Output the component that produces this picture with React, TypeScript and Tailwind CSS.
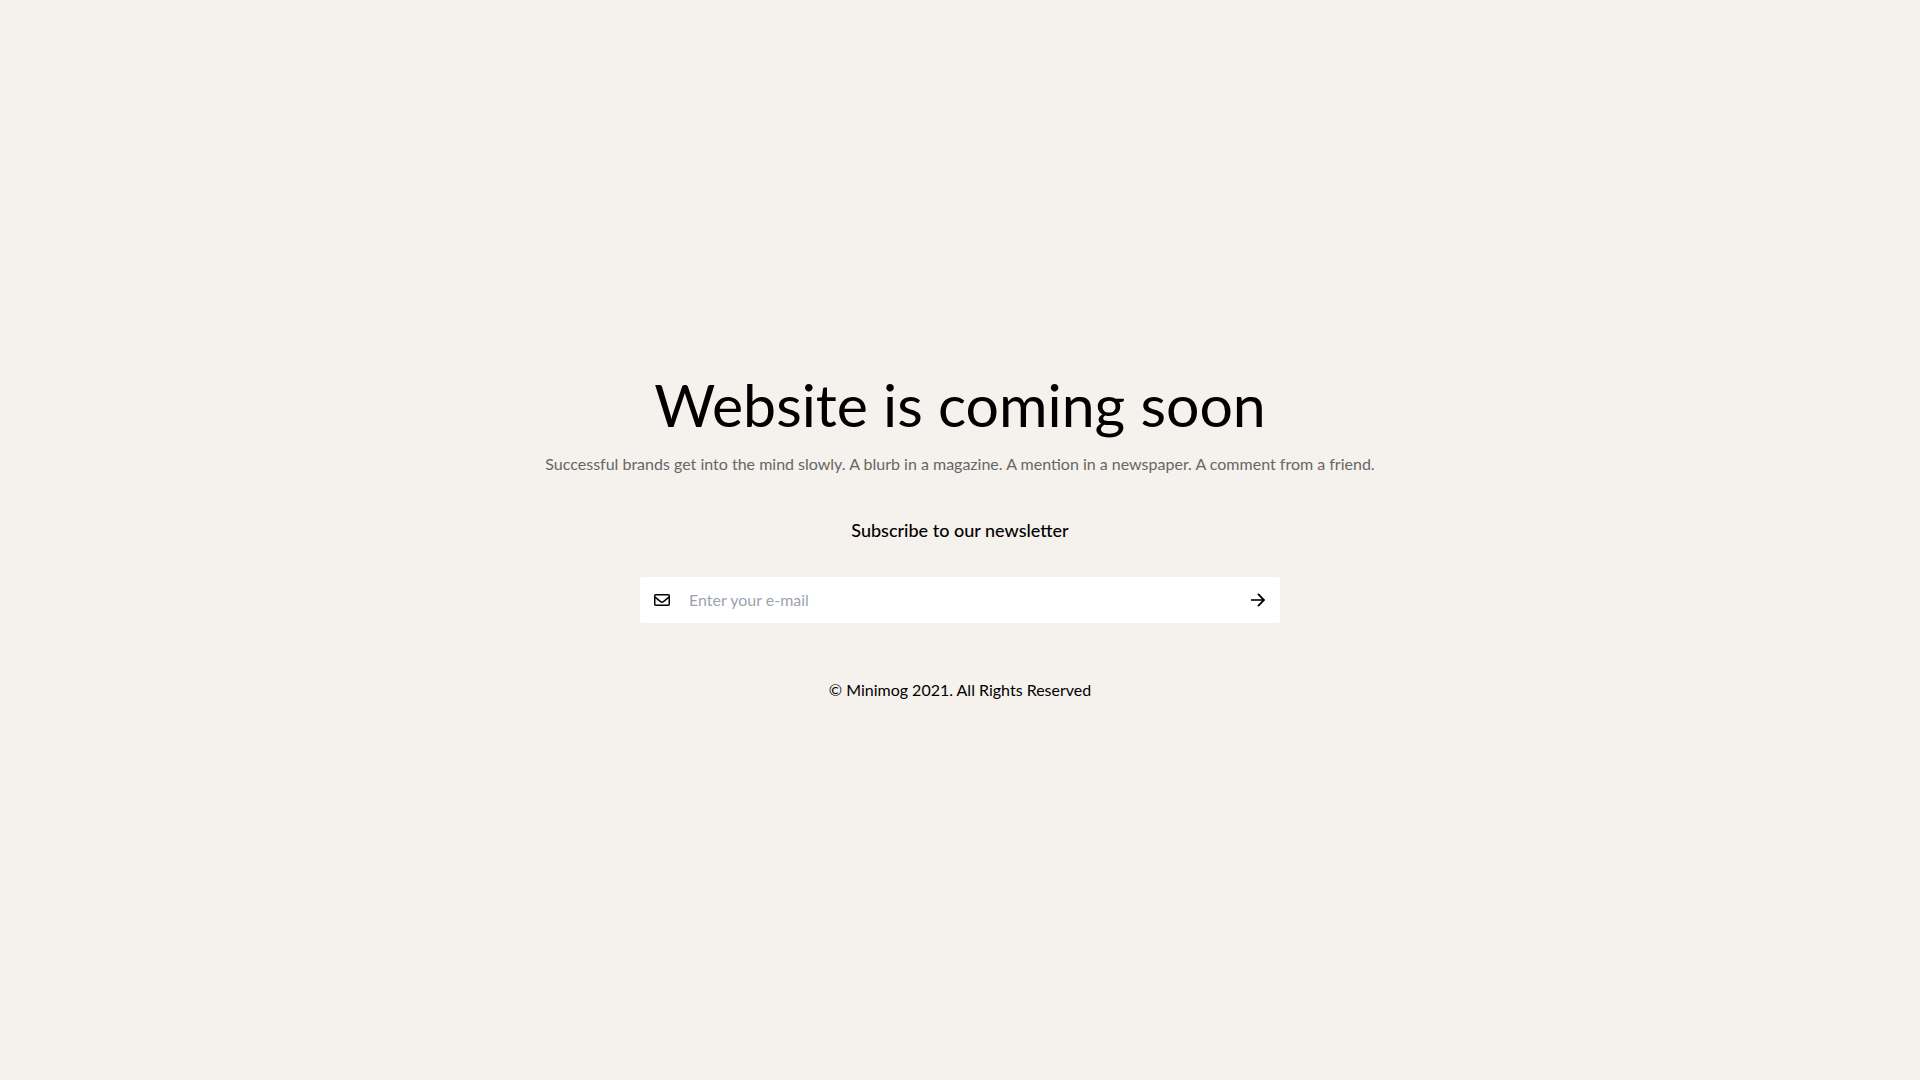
function MailIcon() {
  return (
    <svg width="16" height="12" viewBox="0 0 16 12" fill="none" stroke="currentColor" aria-hidden="true">
      <rect x="0.75" y="0.75" width="14.5" height="10.5" rx="1" strokeWidth="1.5" />
      <path d="M1 3.2L6.6 7.6Q8 8.7 9.4 7.6L15 3.2" strokeWidth="1.5" />
    </svg>
  );
}

function ArrowIcon() {
  return (
    <svg width="14" height="14" viewBox="0 0 14 14" fill="none" stroke="currentColor" aria-hidden="true">
      <path d="M0 7H13" strokeWidth="1.6" />
      <path d="M7 0.8L13 7L7 13.2" strokeWidth="1.8" />
    </svg>
  );
}

export default function App() {
  return (
    <main className="flex min-h-screen flex-col items-center justify-center bg-[#f5f1ec] px-4 pb-[7px] text-center font-[Lato,sans-serif] text-black">
      <h1 className="text-[59px] leading-[72px]">Website is coming soon</h1>
      <p className="mt-[9px] text-[16px] leading-[28px] text-[#666666]">
        Successful brands get into the mind slowly. A blurb in a magazine. A mention in a newspaper. A comment from a friend.
      </p>
      <h2 className="mt-9 text-[18px] leading-[32px] font-medium">Subscribe to our newsletter</h2>
      <form
        className="mt-[31px] flex h-[46px] w-full max-w-[640px] items-center rounded-[3px] bg-white"
        onSubmit={(e) => e.preventDefault()}
      >
        <label htmlFor="email" className="pr-[19px] pl-[14px]">
          <MailIcon />
        </label>
        <input
          id="email"
          type="email"
          aria-label="E-mail"
          placeholder="Enter your e-mail"
          className="h-full min-w-0 flex-1 bg-transparent pb-0.5 text-[16px] outline-none placeholder:text-[#9ca3af]"
        />
        <button type="submit" aria-label="Subscribe" className="h-full pr-[15px] pl-4">
          <ArrowIcon />
        </button>
      </form>
      <p className="mt-[53px] text-[16px] leading-[28px]">© Minimog 2021. All Rights Reserved</p>
    </main>
  );
}
